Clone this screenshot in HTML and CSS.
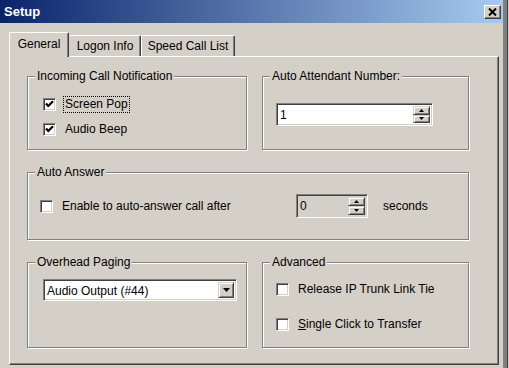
FILE: index.html
```html
<!DOCTYPE html>
<html lang="en">
<head>
    <meta charset="UTF-8">
    <title>Setup</title>
    <link rel="stylesheet" href="styles.css">
</head>
<body>
    <div class="window">
        <div class="titlebar">
            <span class="title">Setup</span>
            <div class="close">
                <svg width="9" height="8" viewBox="0 0 9 8"><path d="M1 0.5 L8 7.5 M8 0.5 L1 7.5" stroke="#000" stroke-width="2"/></svg>
            </div>
        </div>

        <div class="body">
            <div class="tabs">
                <div class="tab active">General</div>
                <div class="tab logon">Logon Info</div>
                <div class="tab speed">Speed Call List</div>
            </div>

            <div class="panel">
                <!-- Incoming Call Notification -->
                <div class="group">
                    <div class="legend">Incoming Call Notification</div>
                    <div class="checks incoming">
                        <div class="check">
                            <span class="box"><svg width="11" height="11" viewBox="0 0 11 11"><path d="M2 4.5 L4.3 7 L9 2.3" fill="none" stroke="#000" stroke-width="2.2"/></svg></span>
                            <span class="text focus">Screen Pop</span>
                        </div>
                        <div class="check">
                            <span class="box"><svg width="11" height="11" viewBox="0 0 11 11"><path d="M2 4.5 L4.3 7 L9 2.3" fill="none" stroke="#000" stroke-width="2.2"/></svg></span>
                            <span class="text">Audio Beep</span>
                        </div>
                    </div>
                </div>

                <!-- Auto Attendant Number -->
                <div class="group">
                    <div class="legend">Auto Attendant Number:</div>
                    <div class="spin attendant">
                        <span class="value">1</span>
                        <div class="spin-buttons">
                            <div class="spin-btn"><svg width="5" height="3" viewBox="0 0 5 3"><path d="M2.5 0 L5 3 L0 3 Z"/></svg></div>
                            <div class="spin-btn"><svg width="5" height="3" viewBox="0 0 5 3"><path d="M0 0 L5 0 L2.5 3 Z"/></svg></div>
                        </div>
                    </div>
                </div>

                <!-- Auto Answer -->
                <div class="group wide">
                    <div class="legend">Auto Answer</div>
                    <div class="answer">
                        <div class="check answer-check">
                            <span class="box"></span>
                            <span class="text">Enable to auto-answer call after</span>
                        </div>
                        <div class="spin seconds-spin">
                            <span class="value">0</span>
                            <div class="spin-buttons">
                                <div class="spin-btn"><svg width="5" height="3" viewBox="0 0 5 3"><path d="M2.5 0 L5 3 L0 3 Z"/></svg></div>
                                <div class="spin-btn"><svg width="5" height="3" viewBox="0 0 5 3"><path d="M0 0 L5 0 L2.5 3 Z"/></svg></div>
                            </div>
                        </div>
                        <span class="seconds">seconds</span>
                    </div>
                </div>

                <!-- Overhead Paging -->
                <div class="group">
                    <div class="legend">Overhead Paging</div>
                    <div class="combo">
                        <span class="value">Audio Output (#44)</span>
                        <div class="combo-btn"><svg width="7" height="4" viewBox="0 0 7 4"><path d="M0 0 L7 0 L3.5 4 Z"/></svg></div>
                    </div>
                </div>

                <!-- Advanced -->
                <div class="group">
                    <div class="legend">Advanced</div>
                    <div class="checks advanced">
                        <div class="check">
                            <span class="box"></span>
                            <span class="text">Release IP Trunk Link Tie</span>
                        </div>
                        <div class="check">
                            <span class="box"></span>
                            <span class="text"><u>S</u>ingle Click to Transfer</span>
                        </div>
                    </div>
                </div>
            </div>
        </div>
    </div>
</body>
</html>
```

FILE: styles.css
```css
* {
    box-sizing: border-box;
}

body {
    margin: 0;
    background-color: #d4d0c8;
    font-family: "Liberation Sans", Arial, sans-serif;
    font-size: 12px;
    color: #000;
}

.window {
    width: 507px;
    height: 368px;
    border-right: 4px solid #808080;
    box-shadow: 1px 0 0 #404040;
}

/* Title bar */
.titlebar {
    height: 23px;
    display: flex;
    align-items: center;
    justify-content: space-between;
    padding: 0 2px 0 4px;
    background: linear-gradient(to right, #0a246a, #a6caf0);
}

.title {
    color: #fff;
    font-weight: bold;
    font-size: 13px;
}

.close {
    width: 17px;
    height: 14px;
    display: flex;
    align-items: center;
    justify-content: center;
    background-color: #d4d0c8;
    border: 1px solid;
    border-color: #fff #404040 #404040 #fff;
    box-shadow: inset -1px -1px 0 #808080;
}

.body {
    padding: 9px 0 0 9px;
}

/* Tabs */
.tabs {
    display: flex;
    align-items: flex-end;
    height: 24px;
}

.tab {
    height: 21px;
    padding-top: 2px;
    line-height: 17px;
    text-align: center;
    border: 1px solid;
    border-bottom: none;
    border-color: #fff #404040 #fff #fff;
    border-radius: 2px 2px 0 0;
    box-shadow: inset -1px 0 0 #808080;
}

.tab.active {
    width: 60px;
    height: 25px;
    padding-top: 3px;
    margin-bottom: -1px;
    position: relative;
    z-index: 1;
    background-color: #d4d0c8;
}

.tab.logon {
    width: 72px;
    border-left-color: transparent;
}

.tab.speed {
    width: 94px;
}

.panel {
    width: 490px;
    height: 309px;
    border: 1px solid;
    border-color: #fff #404040 #404040 #fff;
    box-shadow: inset -1px -1px 0 #808080;
    padding: 19px 0 0 17px;
    display: grid;
    grid-template-columns: 220px 207px;
    grid-template-rows: 74px 68px 86px;
    gap: 22px 15px;
    align-content: start;
}

/* Etched group box */
.group {
    display: flex;
    flex-direction: column;
    border: 1px solid #808080;
    box-shadow: inset 1px 1px 0 #fff, 1px 1px 0 #fff;
}

.group.wide {
    grid-column: 1 / 3;
}

.legend {
    align-self: flex-start;
    margin: -8px 0 0 7px;
    padding: 0 2px;
    height: 14px;
    line-height: 14px;
    background-color: #d4d0c8;
}

/* Checkboxes */
.checks {
    display: flex;
    flex-direction: column;
}

.checks.incoming {
    padding: 12px 0 0 15px;
    gap: 7px;
}

.checks.advanced {
    padding: 11px 0 0 13px;
    gap: 17px;
}

.check {
    display: flex;
    align-items: center;
    height: 18px;
}

.box {
    width: 13px;
    height: 13px;
    flex-shrink: 0;
    margin-right: 7px;
    background-color: #fff;
    border: 1px solid;
    border-color: #808080 #fff #fff #808080;
    box-shadow: inset 1px 1px 0 #404040, inset -1px -1px 0 #d4d0c8;
    display: flex;
}

.box svg {
    display: block;
}

.text {
    border: 1px solid transparent;
    padding: 0 1px;
    line-height: 15px;
}

.text.focus {
    border: 1px dotted #000;
}

/* Spin boxes */
.spin {
    display: flex;
    background-color: #fff;
    border: 1px solid;
    border-color: #808080 #fff #fff #808080;
    box-shadow: inset 1px 1px 0 #404040, inset -1px -1px 0 #d4d0c8;
    padding: 2px 2px 2px 3px;
}

.spin .value {
    flex: 1;
    line-height: 19px;
}

.spin.attendant {
    width: 157px;
    height: 23px;
    margin: 20px 0 0 13px;
}

.spin-buttons {
    width: 17px;
    display: flex;
    flex-direction: column;
}

.spin-btn {
    flex: 1;
    display: flex;
    align-items: center;
    justify-content: center;
    background-color: #d4d0c8;
    border: 1px solid;
    border-color: #d4d0c8 #404040 #404040 #d4d0c8;
    box-shadow: inset 1px 1px 0 #fff, inset -1px -1px 0 #808080;
}

.spin-btn svg {
    display: block;
}

/* Auto answer row */
.answer {
    display: flex;
    align-items: center;
    height: 22px;
    margin-top: 16px;
    padding-left: 12px;
}

.answer-check {
    width: 256px;
}

.spin.seconds-spin {
    width: 72px;
    height: 24px;
    background-color: #d4d0c8;
}

.seconds {
    margin-left: 15px;
}

/* Combo box */
.combo {
    width: 194px;
    height: 22px;
    margin: 10px 0 0 15px;
    display: flex;
    background-color: #fff;
    border: 1px solid;
    border-color: #808080 #fff #fff #808080;
    box-shadow: inset 1px 1px 0 #404040, inset -1px -1px 0 #d4d0c8;
    padding: 2px 2px 2px 3px;
}

.combo .value {
    flex: 1;
    line-height: 18px;
}

.combo-btn {
    width: 16px;
    display: flex;
    align-items: center;
    justify-content: center;
    background-color: #d4d0c8;
    border: 1px solid;
    border-color: #d4d0c8 #404040 #404040 #d4d0c8;
    box-shadow: inset 1px 1px 0 #fff, inset -1px -1px 0 #808080;
}
```
